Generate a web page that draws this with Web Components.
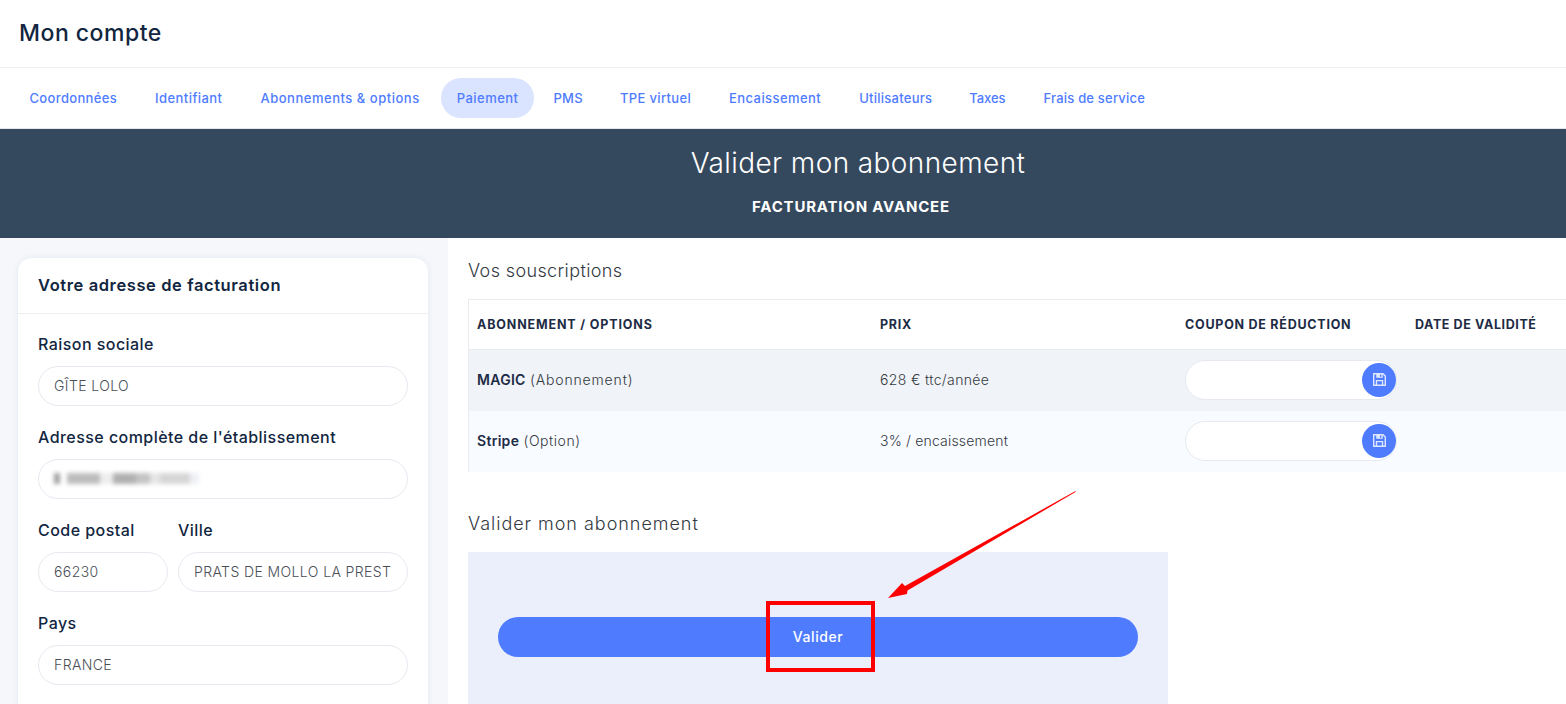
<!DOCTYPE html>
<html lang="fr">
<head>
<meta charset="utf-8">
<title>Mon compte</title>
<style>
  html, body { margin: 0; padding: 0; height: 704px; overflow: hidden; background: #fff; }
  body { font-family: "Inter", "Liberation Sans", sans-serif; color: #12263f; position: relative; }
</style>
</head>
<body>
<template id="tpl-topbar">
  <style>
  :host { display: flex; align-items: center; height: 67px; padding: 0 19px; border-bottom: 1px solid #edeff3; }
  h1 { margin: 0; font-size: 23px; font-weight: 500; color: #12263f; letter-spacing: .5px; position: relative; top: -1px; }
  </style>
  <h1><slot></slot></h1>
</template>

<template id="tpl-tabs">
  <style>
  :host { display: flex; align-items: center; gap: 7px; height: 60px; padding: 0 0 0 14px; border-bottom: 1px solid #e3e6ec; }
  </style>
  <slot></slot>
</template>

<template id="tpl-tab">
  <style>
  :host { display: block; letter-spacing: .34px; }
  a { display: block; height: 40px; line-height: 40px; padding: 0 15.5px; border-radius: 20px; font-size: 13px; font-weight: 500; color: #4f7cff; white-space: nowrap; }
  :host([active]) a { background: #dbe4ff; }
  </style>
  <a><slot></slot></a>
</template>

<template id="tpl-banner">
  <style>
  :host { display: block; height: 109px; background: #35495e; color: #fff; text-align: center; }
  h2 { margin: 0; padding-top: 17px; font-size: 28px; line-height: 34px; font-weight: 300; letter-spacing: .4px; transform: translateX(75px); }
  p { margin: 17px 0 0; font-size: 15px; line-height: 20px; font-weight: 700; letter-spacing: .8px; transform: translateX(68px); }
  </style>
  <h2><slot name="title"></slot></h2>
  <p><slot name="sub"></slot></p>
</template>

<template id="tpl-layout">
  <style>
  :host { display: grid; grid-template-columns: 448px 1fr; height: 466px; overflow: hidden; }
  .side { background: #f5f7fb; padding: 20px 20px 0 18px; box-sizing: border-box; }
  .main { background: #fff; padding: 0 0 0 20px; min-width: 0; }
  </style>
  <div class="side"><slot name="side"></slot></div>
  <div class="main"><slot name="main"></slot></div>
</template>

<template id="tpl-card">
  <style>
  :host { display: block; background: #fff; border-radius: 14px; box-shadow: 0 0 6px rgba(30,50,90,.08); height: 600px; }
  header { height: 55px; line-height: 55px; padding: 0 20px; border-bottom: 1px solid #edeff3; font-size: 16.5px; font-weight: 600; color: #12263f; letter-spacing: .6px; }
  .body { padding: 19px 20px 0; display: grid; grid-template-columns: 130px 1fr; column-gap: 10px; }
  ::slotted(form-field) { grid-column: 1 / 3; }
  ::slotted(form-field[half]) { grid-column: auto; }
  </style>
  <header><slot name="title"></slot></header>
  <div class="body"><slot></slot></div>
</template>

<template id="tpl-field">
  <style>
  :host { display: block; margin-bottom: 20px; }
  label { display: block; height: 26px; line-height: 23px; font-size: 16px; font-weight: 500; color: #12263f; letter-spacing: .45px; white-space: nowrap; }
  .box { display: flex; align-items: center; margin-top: 7px; height: 37px; padding: 0 15px 1px; border: 1px solid #e7e9f0; border-radius: 20px; background: #fff; font-size: 14px; font-weight: 300; color: #4a4f57; letter-spacing: .4px; white-space: nowrap; overflow: hidden; }
  </style>
  <label><slot name="label"></slot></label>
  <div class="box"><slot></slot></div>
</template>

<template id="tpl-smudge">
  <style>
  :host { display: block; width: 146px; height: 11px; filter: blur(2px); background:
    linear-gradient(90deg, #a0a0a0 0 6px, transparent 6px 13px, #bcbcbc 13px 46px, #eee 46px 59px, #b0b0b0 59px 80px, #c4c4c4 84px 96px, #e6e6e6 96px 106px, #d6d6d6 106px 136px, #eef0f6 136px 145px, transparent 145px); }
  </style>
</template>

<template id="tpl-section-title">
  <style>
  :host { display: block; font-size: 18px; font-weight: 300; color: #33393f; line-height: 24px; }
  </style>
  <slot></slot>
</template>

<template id="tpl-subs">
  <style>
  :host { display: block; width: 1120px; margin-top: 16px; border-left: 1px solid #e9ebef; border-top: 1px solid #e9ebef; font-size: 14px; }
  .head { display: grid; grid-template-columns: 403px 305px 230px 1fr; align-items: center; padding-left: 8px; height: 49px; border-bottom: 1px solid #e9ebef; font-size: 12.5px; font-weight: 700; color: #1d2b45; letter-spacing: .75px; }
  </style>
  <div class="head"><span style="letter-spacing:.85px">ABONNEMENT / OPTIONS</span><span>PRIX</span><span>COUPON DE RÉDUCTION</span><span style="letter-spacing:.6px">DATE DE VALIDITÉ</span></div>
  <slot></slot>
</template>

<template id="tpl-subrow">
  <style>
  :host { display: grid; box-sizing: border-box; grid-template-columns: 403px 305px 230px 1fr; align-items: center; padding: 0 0 2px 8px; height: 61px; background: #f8fbff; font-size: 14px; font-weight: 300; color: #33393f; letter-spacing: .3px; }
  :host([shade]) { background: #f0f3f7; }
  b { font-weight: 600; color: #1d2b45; letter-spacing: .3px; }
  </style>
  <span><b><slot name="name"></slot></b> <slot name="kind"></slot></span>
  <span><slot name="price"></slot></span>
  <coupon-input></coupon-input>
</template>

<template id="tpl-coupon">
  <style>
  :host { display: flex; align-items: center; justify-content: flex-end; width: 212px; height: 40px; box-sizing: border-box; border: 1px solid #e7e9f0; border-radius: 20px; background: #fff; }
  .btn { width: 34px; height: 34px; border-radius: 50%; background: #4f7cff; display: flex; align-items: center; justify-content: center; }
  svg { width: 13px; height: 13px; }
  </style>
  <div class="btn"><svg viewBox="0 0 14 14"><path fill="#dfe7ff" fill-rule="evenodd" d="M0 0H11L14 3V14H0ZM1.500 1.500V12.500H3V7.500H11V12.500H12.500V3.600L10.500 1.500V5H3.500V1.500ZM4.500 9V12.500H9.500V9ZM7.500 1.500V4H9V1.500Z"/></svg></div>
</template>

<template id="tpl-validate">
  <style>
  :host { display: block; width: 700px; height: 160px; margin-top: 16px; background: #ebeffb; padding: 65px 30px 0; box-sizing: border-box; }
  button { display: block; width: 640px; height: 40px; border: 0; border-radius: 20px; padding: 0 0 2px; background: #4f7cff; color: #fff; font: 500 14px "Inter", "Liberation Sans", sans-serif; letter-spacing: .55px; }
  </style>
  <button><slot></slot></button>
</template>

<template id="tpl-annotation">
  <style>
  :host { display: block; position: absolute; left: 0; top: 0; width: 1566px; height: 704px; pointer-events: none; }
  svg { display: block; }
  </style>
  <svg width="1566" height="704" viewBox="0 0 1566 704">
    <rect x="768" y="603" width="105" height="67" fill="none" stroke="#ff0000" stroke-width="4"/>
    <path d="M1075.500 491 L905 586 L902 583 L888 598 L907 594 L907.500 590.500 L1075.500 492 Z" fill="#ff0000"/>
  </svg>
</template>

<top-bar>Mon compte</top-bar>
<tab-bar>
  <tab-link>Coordonnées</tab-link>
  <tab-link style="letter-spacing:.43px">Identifiant</tab-link>
  <tab-link style="letter-spacing:.52px">Abonnements &amp; options</tab-link>
  <tab-link active style="letter-spacing:.46px;margin-left:-1px">Paiement</tab-link>
  <tab-link style="margin-left:-3px">PMS</tab-link>
  <tab-link style="margin-left:-1px">TPE virtuel</tab-link>
  <tab-link style="letter-spacing:.42px">Encaissement</tab-link>
  <tab-link style="letter-spacing:.26px">Utilisateurs</tab-link>
  <tab-link style="letter-spacing:-.06px;margin-left:-1px">Taxes</tab-link>
  <tab-link style="letter-spacing:.2px">Frais de service</tab-link>
</tab-bar>
<page-banner>
  <span slot="title">Valider mon abonnement</span>
  <span slot="sub">FACTURATION AVANCEE</span>
</page-banner>
<page-layout>
  <address-card slot="side">
    <span slot="title">Votre adresse de facturation</span>
    <form-field><span slot="label">Raison sociale</span>GÎTE LOLO</form-field>
    <form-field><span slot="label">Adresse complète de l'établissement</span><blur-smudge></blur-smudge></form-field>
    <form-field half><span slot="label">Code postal</span>66230</form-field>
    <form-field half><span slot="label">Ville</span>PRATS DE MOLLO LA PREST</form-field>
    <form-field><span slot="label">Pays</span>FRANCE</form-field>
  </address-card>
  <div slot="main">
    <section-title style="margin-top:21px;letter-spacing:.38px">Vos souscriptions</section-title>
    <subs-table>
      <sub-row shade><span slot="name">MAGIC</span><span slot="kind" style="letter-spacing:.85px">(Abonnement)</span><span slot="price" style="letter-spacing:.36px">628 € ttc/année</span></sub-row>
      <sub-row><span slot="name">Stripe</span><span slot="kind" style="letter-spacing:.55px">(Option)</span><span slot="price" style="letter-spacing:.18px">3% / encaissement</span></sub-row>
    </subs-table>
    <section-title style="margin-top:40px;letter-spacing:.97px">Valider mon abonnement</section-title>
    <validate-panel>Valider</validate-panel>
  </div>
</page-layout>
<red-annotation></red-annotation>

<script>
const simple = {
  'top-bar': 'tpl-topbar',
  'tab-bar': 'tpl-tabs',
  'tab-link': 'tpl-tab',
  'page-banner': 'tpl-banner',
  'page-layout': 'tpl-layout',
  'address-card': 'tpl-card',
  'form-field': 'tpl-field',
  'blur-smudge': 'tpl-smudge',
  'section-title': 'tpl-section-title',
  'subs-table': 'tpl-subs',
  'sub-row': 'tpl-subrow',
  'coupon-input': 'tpl-coupon',
  'validate-panel': 'tpl-validate',
  'red-annotation': 'tpl-annotation'
}
for (const [name, id] of Object.entries(simple)) {
  customElements.define(name, class extends HTMLElement {
    constructor () {
      super()
      const content = document.getElementById(id).content.cloneNode(true);
      this.attachShadow({ mode: 'open' }).appendChild(content);
    }
  })
}
</script>
</body>
</html>
